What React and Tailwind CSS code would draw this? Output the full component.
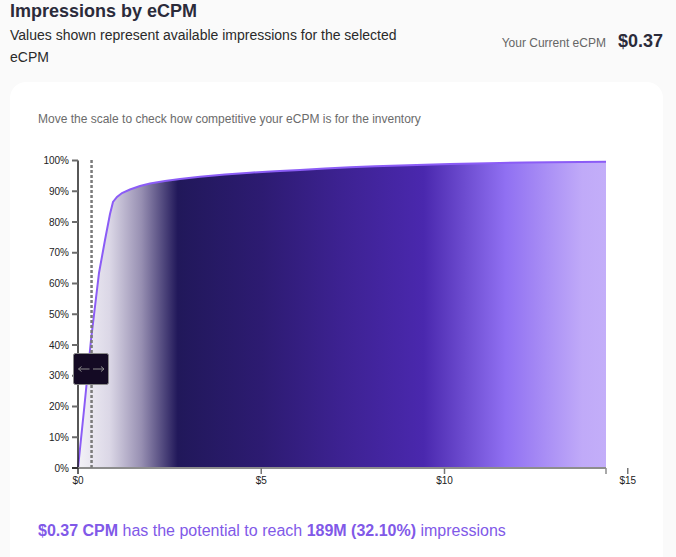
import React from "react";

const X0 = 68;
const PX = 36.65;
const Y0 = 328;
const PY = 3.075;

const curvePts = [
  [68, 328], [74, 270], [81, 200], [89, 133], [95, 100], [100, 74], [103, 62],
  [107, 57], [112, 53], [120, 49.5], [130, 46], [140, 43.5], [155, 41], [170, 39],
  [190, 36.7], [215, 34.6], [240, 32.7], [265, 31.2], [290, 30], [315, 28.6],
  [340, 27.3], [365, 26.3], [390, 25.5], [415, 24.7], [440, 24], [465, 23.5],
  [490, 23], [515, 22.6], [540, 22.3], [570, 22], [596, 21.7],
];

function Chart() {
  const line = curvePts.map((p, i) => (i === 0 ? "M" : "L") + p[0] + " " + p[1]).join(" ");
  const area = line + " L596 328 L68 328 Z";
  const yTicks = [0, 10, 20, 30, 40, 50, 60, 70, 80, 90, 100];
  const xTicks = [0, 5, 10];
  const dotX = X0 + 0.37 * PX;
  return (
    <svg width="653" height="350" viewBox="0 0 653 350" className="block" style={{ fontFamily: '"Liberation Sans", Arial, sans-serif' }}>
      <defs>
        <linearGradient id="fillg" gradientUnits="userSpaceOnUse" x1="68" y1="0" x2="596" y2="0">
          <stop offset="0" stopColor="#f3f2f7" />
          <stop offset="0.06" stopColor="#dbd7e6" />
          <stop offset="0.12" stopColor="#978fb2" />
          <stop offset="0.189" stopColor="#21185a" />
          <stop offset="0.35" stopColor="#2d1b72" />
          <stop offset="0.5" stopColor="#3d2292" />
          <stop offset="0.655" stopColor="#4a28ae" />
          <stop offset="0.81" stopColor="#9070f2" />
          <stop offset="0.955" stopColor="#c0aaf8" />
          <stop offset="1" stopColor="#c3aef9" />
        </linearGradient>
      </defs>
      <path d={area} fill="url(#fillg)" />
      <path d={line} fill="none" stroke="#8b5cf6" strokeWidth="2" />
      {/* y axis */}
      <line x1={X0} y1={20.5} x2={X0} y2={Y0} stroke="#1f1f1f" strokeWidth="1.5" />
      {yTicks.map((t) => {
        const y = Y0 - t * PY;
        return (
          <g key={t}>
            <line x1={X0 - 6} y1={y} x2={X0} y2={y} stroke={t === 0 ? "#333" : "#6b6b6b"} strokeWidth="2" />
            <text x={X0 - 9} y={y + 3.5} fontSize="10" fill="#222" textAnchor="end">{t}%</text>
          </g>
        );
      })}
      {/* x axis */}
      <line x1={X0} y1={Y0} x2={596} y2={Y0} stroke="#8d8d8d" strokeWidth="2" />
      {xTicks.map((t) => {
        const x = X0 + t * PX;
        return (
          <g key={t}>
            <line x1={x} y1={Y0} x2={x} y2={Y0 + 6} stroke={t === 0 ? "#333" : "#777"} strokeWidth="1.5" />
            <text x={x} y={Y0 + 16} fontSize="10" fill="#222" textAnchor="middle">${t}</text>
          </g>
        );
      })}
      <line x1={596} y1={Y0} x2={596} y2={Y0 + 6} stroke="#8d8d8d" strokeWidth="1.5" />
      <line x1={X0 + 15 * PX} y1={Y0} x2={X0 + 15 * PX} y2={Y0 + 6} stroke="#777" strokeWidth="1.5" />
      <text x={X0 + 15 * PX} y={Y0 + 16} fontSize="10" fill="#222" textAnchor="middle">$15</text>
      {/* dotted line */}
      <line x1={dotX} y1={20} x2={dotX} y2={Y0} stroke="#7a7a7a" strokeWidth="2.5" strokeDasharray="3 2" />
      {/* handle */}
      <rect x={63.5} y={213.5} width={35} height={31} rx="2" fill="#140a24" stroke="#8a8a8a" strokeWidth="1" />
      <g stroke="#8c8c8c" strokeWidth="1" fill="none">
        <line x1={68.5} y1={229} x2={79.5} y2={229} />
        <path d="M71.5 226.5 L68.5 229 L71.5 231.5" />
        <line x1={83} y1={229} x2={94} y2={229} />
        <path d="M91 226.5 L94 229 L91 231.5" />
      </g>
    </svg>
  );
}

export default function App() {
  return (
    <div
      className="min-h-[557px] bg-[#fafafa] pl-[10px] pr-[13px] overflow-hidden"
      style={{ fontFamily: '"Liberation Sans", Arial, sans-serif' }}
    >
      <div className="flex items-start justify-between">
        <div className="w-[400px]">
          <h1 className="text-[18px] leading-[22px] font-bold text-[#2b2b3a]">Impressions by eCPM</h1>
          <p className="mt-[2px] text-[14px] leading-[22px] text-[#2a2a2a]">
            Values shown represent available impressions for the selected eCPM
          </p>
        </div>
        <div className="mt-[28px] flex items-baseline gap-[12px]">
          <span className="text-[12px] text-[#666]">Your Current eCPM</span>
          <span className="text-[18px] font-bold text-[#2b2b3a]">$0.37</span>
        </div>
      </div>
      <div className="mt-[14px] rounded-[16px] bg-white pt-[29px] pb-[40px]">
        <p className="pl-[28px] text-[12px] leading-[16px] text-[#6b6b6b]">
          Move the scale to check how competitive your eCPM is for the inventory
        </p>
        <div className="mt-[13px]">
          <Chart />
        </div>
        <p className="mt-[31px] pl-[28px] text-[16px] leading-[20px] text-[#8159e8]">
          <span className="font-bold">$0.37 CPM</span> has the potential to reach{" "}
          <span className="font-bold">189M (32.10%)</span> impressions
        </p>
      </div>
    </div>
  );
}
